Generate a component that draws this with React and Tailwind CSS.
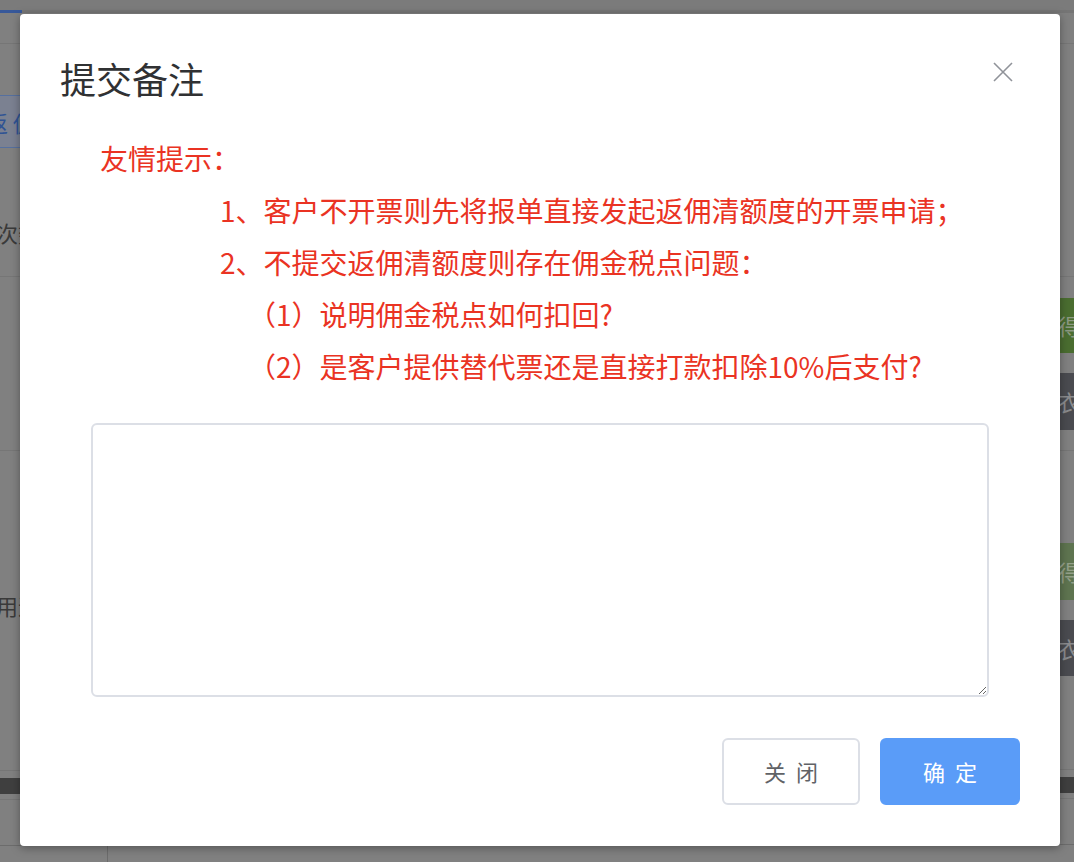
import React from 'react';

const font = { fontFamily: '"Noto Sans CJK SC", "Noto Sans", sans-serif' };

const Line = () => <div className="h-px bg-[#767676]" />;

const LeftColumn = () => (
  <div className="w-[108px] flex flex-col">
    <div className="h-[10px] bg-[#7b7b7b]" />
    <div className="h-[3px] flex">
      <div className="w-[22px] bg-[#37589a]" />
      <div className="flex-1 bg-[#757575]" />
    </div>
    <div className="h-[30px]" />
    <Line />
    <div className="h-[51px]" />
    <div className="h-[53px] bg-[#7b8191] border-y border-[#56709f] flex items-center overflow-hidden">
      <span className="text-[22px] leading-[28px] text-[#2f5394] -ml-[14px] whitespace-nowrap">返 佣值</span>
    </div>
    <div className="h-[70px]" />
    <div className="h-[28px] overflow-hidden">
      <span className="text-[22px] leading-[28px] text-[#3a3a3a] -ml-[4px] whitespace-nowrap">次数</span>
    </div>
    <div className="h-[30px]" />
    <Line />
    <div className="h-[173px]" />
    <Line />
    <div className="h-[140px]" />
    <div className="h-[28px] overflow-hidden">
      <span className="text-[22px] leading-[28px] text-[#3a3a3a] -ml-[4px] whitespace-nowrap">用途</span>
    </div>
    <div className="h-[151px]" />
    <Line />
    <div className="h-[7px]" />
    <div className="h-[16px] bg-[#3f3f3f]" />
    <div className="h-[5px]" />
    <Line />
    <div className="h-[45px]" />
    <div className="flex-1 border-t border-r border-[#6c6c6c]" />
  </div>
);

const MiddleColumn = () => (
  <div className="flex-1 flex flex-col">
    <div className="h-[10px] bg-[#7b7b7b]" />
    <div className="h-[3px] bg-[#757575]" />
    <div className="flex-1" />
    <div className="h-[17px] border-t border-[#6c6c6c]" />
  </div>
);

const RightColumn = () => (
  <div className="w-[60px] flex flex-col">
    <div className="h-[10px] bg-[#7b7b7b]" />
    <div className="h-[3px] bg-[#757575]" />
    <div className="h-[30px]" />
    <Line />
    <div className="h-[232px]" />
    <Line />
    <div className="h-[21px]" />
    <div className="h-[55px] bg-[#4a6d30] flex items-center pl-[44px] overflow-hidden">
      <span className="text-[22px] text-[#8d9a84] whitespace-nowrap">得</span>
    </div>
    <div className="h-[20px]" />
    <div className="h-[57px] bg-[#4a4b50] flex items-center pl-[44px] overflow-hidden">
      <span className="text-[22px] text-[#8a8b8e] whitespace-nowrap">衣</span>
    </div>
    <div className="h-[20px]" />
    <Line />
    <div className="h-[92px]" />
    <div className="h-[57px] bg-[#5e7450] flex items-center pl-[44px] overflow-hidden">
      <span className="text-[22px] text-[#94a08a] whitespace-nowrap">得</span>
    </div>
    <div className="h-[20px]" />
    <div className="h-[56px] bg-[#4a4b50] flex items-center pl-[44px] overflow-hidden">
      <span className="text-[22px] text-[#8a8b8e] whitespace-nowrap">衣</span>
    </div>
    <div className="h-[93px]" />
    <Line />
    <div className="h-[7px]" />
    <div className="h-[16px] bg-[#3f3f3f]" />
    <div className="h-[5px]" />
    <Line />
    <div className="h-[45px]" />
    <div className="flex-1 border-t border-[#6c6c6c]" />
  </div>
);

const CloseIcon = () => (
  <svg width="20" height="20" viewBox="0 0 20 20" fill="none" stroke="#909399" strokeWidth="1.6">
    <path d="M1 1 L19 19 M19 1 L1 19" />
  </svg>
);

export default function App() {
  return (
    <div className="relative w-[1074px] h-[862px] overflow-hidden bg-[#808080] flex" style={font}>
      <LeftColumn />
      <MiddleColumn />
      <RightColumn />

      <div className="absolute left-[20px] top-[14px] w-[1040px] h-[832px] bg-white rounded-[4px] shadow-[0_2px_10px_rgba(0,0,0,0.35)]">
        <div className="pt-[40px] px-[40px]">
          <h2 className="text-[36px] leading-[48px] text-[#303133]">提交备注</h2>
        </div>
        <button className="absolute top-[48px] right-[47px] w-[20px] h-[20px] flex items-center justify-center">
          <CloseIcon />
        </button>

        <div className="mt-[30px] pl-[80px] text-[28px] leading-[52px] text-[#ea3323] whitespace-nowrap">
          <p>友情提示：</p>
          <p className="pl-[120px]">1、客户不开票则先将报单直接发起返佣清额度的开票申请；</p>
          <p className="pl-[120px]">2、不提交返佣清额度则存在佣金税点问题：</p>
          <p className="pl-[148px]">（1）说明佣金税点如何扣回?</p>
          <p className="pl-[148px]">（2）是客户提供替代票还是直接打款扣除10%后支付?</p>
        </div>

        <textarea
          className="block mx-[71px] mt-[31px] w-[898px] h-[274px] border-2 border-[#dcdfe6] rounded-[6px] resize-y outline-none p-[10px] text-[20px] text-[#606266]"
        />

        <div className="mt-[41px] pr-[40px] flex justify-end gap-[20px]">
          <button className="w-[138px] h-[67px] border-2 border-[#dcdfe6] rounded-[6px] bg-white text-[22px] text-[#606266] tracking-[10px] pl-[10px]">
            关闭
          </button>
          <button className="w-[140px] h-[67px] rounded-[6px] bg-[#5a9cf8] text-[22px] text-white tracking-[10px] pl-[10px]">
            确定
          </button>
        </div>
      </div>
    </div>
  );
}
